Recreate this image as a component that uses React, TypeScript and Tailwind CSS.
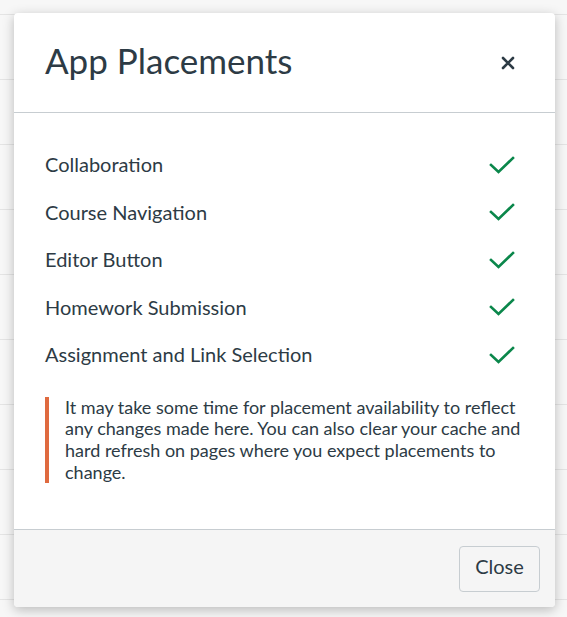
import { FC } from 'react';

const placements = [
  'Collaboration',
  'Course Navigation',
  'Editor Button',
  'Homework Submission',
  'Assignment and Link Selection',
];

const Check: FC = () => (
  <svg width="26" height="18" viewBox="0 0 26 18" fill="none">
    <path d="M2 9 L9.5 16 L24 2" stroke="#0b874b" strokeWidth="2.6" strokeLinecap="square" strokeLinejoin="miter" />
  </svg>
);

const App: FC = () => {
  return (
    <div className="relative w-[567px] h-[617px] overflow-hidden bg-[#f7f7f7]" style={{ fontFamily: 'Lato, "Noto Sans", sans-serif' }}>
      {/* page behind the dialog */}
      <div className="flex flex-col">
        <div className="h-[15px] border-b border-[#e4e4e4]" />
        {Array.from({ length: 9 }).map((_, i) => (
          <div key={i} className="h-[65px] border-b border-[#e4e4e4]" />
        ))}
      </div>

      <div className="absolute left-[14px] top-[13px] w-[541px] h-[594px] bg-white rounded-[4px] shadow-[0_3px_12px_rgba(0,0,0,0.25)] flex flex-col overflow-hidden text-[#2d3b45]">
        <div className="h-[100px] flex items-center justify-between pl-[31px] pr-[40px] border-b border-[#c7cdd1] shrink-0">
          <h2 className="text-[35px] leading-[40px] font-normal pb-[6px]">App Placements</h2>
          <button className="flex items-center justify-center">
            <svg width="14" height="14" viewBox="0 0 14 14">
              <path d="M2 2 L12 12 M12 2 L2 12" stroke="#2d3b45" strokeWidth="2.6" strokeLinecap="round" />
            </svg>
          </button>
        </div>

        <div className="flex-1 pt-[28px] pl-[31px] pr-[40px]">
          {placements.map((p) => (
            <div key={p} className="h-[47.5px] flex items-center justify-between">
              <span className="text-[20px] pb-[1px]">{p}</span>
              <Check />
            </div>
          ))}
          <div className="mt-[18px] border-l-4 border-[#df6a3f] pl-[16px] mr-[-24px] text-[18px] leading-[21.7px]">
            It may take some time for placement availability to reflect any changes made here. You can also clear your cache and hard refresh on pages where you expect placements to change.
          </div>
        </div>

        <div className="h-[78px] shrink-0 bg-[#f5f5f5] border-t border-[#c7cdd1] flex items-center justify-end pr-[15px]">
          <button className="h-[46px] w-[81px] rounded-[4px] border border-[#c7cdd1] bg-[#f5f5f5] text-[20px] text-[#2d3b45] pb-[5px]">
            Close
          </button>
        </div>
      </div>
    </div>
  );
};

export default App;
